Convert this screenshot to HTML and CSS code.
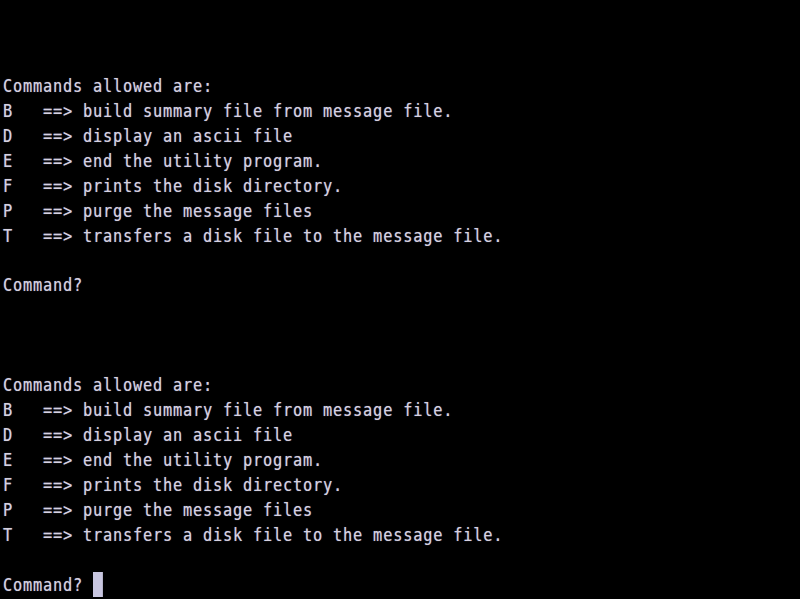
FILE: index.html
```html
<!DOCTYPE html>
<html>
<head>
<meta charset="utf-8">
<link rel="stylesheet" href="styles.css">
</head>
<body>
<div class="screen">
<div class="line"></div>
<div class="line"></div>
<div class="line"></div>
<div class="line">Commands allowed are:</div>
<div class="line">B   ==&gt; build summary file from message file.</div>
<div class="line">D   ==&gt; display an ascii file</div>
<div class="line">E   ==&gt; end the utility program.</div>
<div class="line">F   ==&gt; prints the disk directory.</div>
<div class="line">P   ==&gt; purge the message files</div>
<div class="line">T   ==&gt; transfers a disk file to the message file.</div>
<div class="line"></div>
<div class="line">Command?</div>
<div class="line"></div>
<div class="line"></div>
<div class="line"></div>
<div class="line">Commands allowed are:</div>
<div class="line">B   ==&gt; build summary file from message file.</div>
<div class="line">D   ==&gt; display an ascii file</div>
<div class="line">E   ==&gt; end the utility program.</div>
<div class="line">F   ==&gt; prints the disk directory.</div>
<div class="line">P   ==&gt; purge the message files</div>
<div class="line">T   ==&gt; transfers a disk file to the message file.</div>
<div class="line"></div>
<div class="line">Command? <span class="cursor"></span></div>
</div>
</body>
</html>
```
FILE: styles.css
```css
html, body {
  margin: 0;
  padding: 0;
  background: #000;
}
.screen {
  width: 800px;
  height: 599px;
  overflow: hidden;
  padding-left: 3px;
  box-sizing: border-box;
  background: #000;
  color: #d6d2e2;
  font-family: "DejaVu Sans Mono", "Liberation Mono", monospace;
  font-size: 17px;
  letter-spacing: 0.88px;
  text-shadow: 0 0 1px rgba(200, 196, 230, 0.6);
}
.line {
  height: 24.96px;
  line-height: 23px;
  white-space: pre;
  transform: scaleX(0.9);
  transform-origin: 0 0;
}
.cursor {
  display: inline-block;
  width: 11.1px;
  height: 25px;
  background: #c8c6e0;
  vertical-align: top;
  margin-top: -2px;
}
```
